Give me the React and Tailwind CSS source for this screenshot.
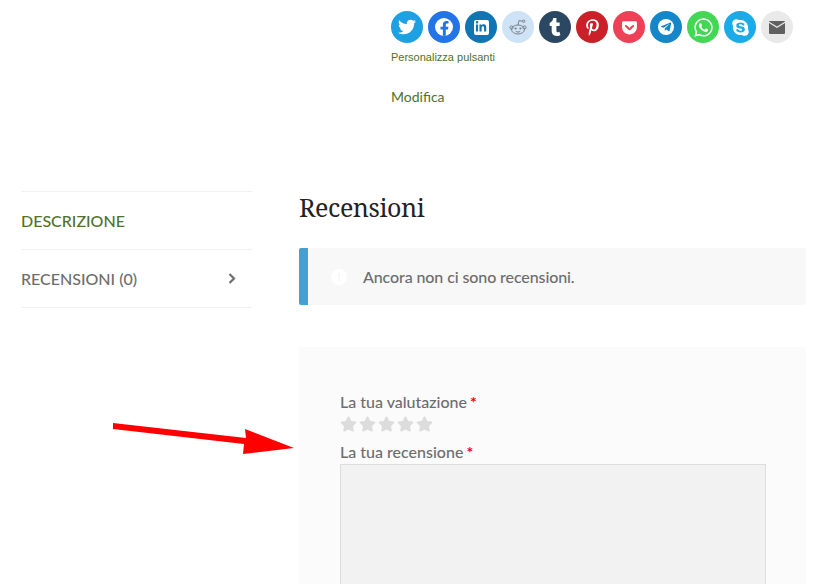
import {
	FaTwitter,
	FaFacebookF,
	FaLinkedinIn,
	FaTumblr,
	FaPinterestP,
	FaGetPocket,
	FaTelegramPlane,
	FaWhatsapp,
	FaSkype,
	FaStar,
	FaExclamation,
} from "react-icons/fa";

function RedditIcon() {
	return (
		<svg width="20" height="20" viewBox="0 0 20 20" fill="none" stroke="#7b8087" strokeWidth="1">
			<ellipse cx="10" cy="12.5" rx="6.5" ry="4.5" fill="#cfe3f7" />
			<circle cx="3.5" cy="10.5" r="1.6" />
			<circle cx="16.5" cy="10.5" r="1.6" />
			<path d="M10 8 L11 3.5 L14.5 4.3" />
			<circle cx="15.7" cy="4.2" r="1.2" />
			<circle cx="7.6" cy="11.5" r="1.1" fill="#7b8087" stroke="none" />
			<circle cx="12.4" cy="11.5" r="1.1" fill="#7b8087" stroke="none" />
			<path d="M7.8 14.5 Q10 15.8 12.2 14.5" />
		</svg>
	);
}

function MailIcon() {
	return (
		<svg width="16" height="13" viewBox="0 0 16 13">
			<rect width="16" height="13" rx="1" fill="#606060" />
			<path d="M0 1.2 L8 6.2 L16 1.2" fill="none" stroke="#e9e9e9" strokeWidth="1.2" />
		</svg>
	);
}

const shareButtons = [
	{ name: "twitter", bg: "bg-[#1da1e2]", icon: <FaTwitter className="text-white text-[18px]" /> },
	{ name: "facebook", bg: "bg-[#2374e6]", icon: <span className="flex h-[18px] w-[18px] items-end justify-center overflow-hidden rounded-full bg-white"><FaFacebookF className="text-[#2374e6] text-[15px]" /></span> },
	{ name: "linkedin", bg: "bg-[#0f76b3]", icon: <span className="flex h-[15px] w-[15px] items-center justify-center rounded-[2px] bg-white"><FaLinkedinIn className="text-[#0f76b3] text-[12px]" /></span> },
	{ name: "reddit", bg: "bg-[#cfe3f7]", icon: <RedditIcon /> },
	{ name: "tumblr", bg: "bg-[#2c4762]", icon: <FaTumblr className="text-white text-[18px]" /> },
	{ name: "pinterest", bg: "bg-[#cb2027]", icon: <FaPinterestP className="text-white text-[17px]" /> },
	{ name: "pocket", bg: "bg-[#ee4056]", icon: <FaGetPocket className="text-white text-[17px]" /> },
	{ name: "telegram", bg: "bg-[#1486c9]", icon: <span className="flex h-[16px] w-[16px] items-center justify-center rounded-full bg-white"><FaTelegramPlane className="text-[#1486c9] text-[12px]" /></span> },
	{ name: "whatsapp", bg: "bg-[#43d854]", icon: <FaWhatsapp className="text-white text-[21px]" /> },
	{ name: "skype", bg: "bg-[#1cabe9]", icon: <FaSkype className="text-white text-[19px]" /> },
	{ name: "email", bg: "bg-[#e9e9e9]", icon: <MailIcon /> },
];

function Arrow() {
	return (
		<svg className="absolute left-[110px] top-[420px]" width="190" height="40" viewBox="0 0 190 40">
			<path d="M3 3 L136 18 L135 9 L184 28 L133 34 L134 24 L3 9 Z" fill="#ff0000" />
		</svg>
	);
}

export default function App() {
	return (
		<div className="relative h-[584px] w-[813px] overflow-hidden bg-white font-['Lato','Liberation_Sans',sans-serif] text-[#6d6d6d]">
			{/* share buttons */}
			<div className="ml-[391px] h-[191px] pt-[11px]">
				<div className="flex gap-[5px]">
					{shareButtons.map((b) => (
						<span key={b.name} className={`flex h-[32px] w-[32px] items-center justify-center rounded-full ${b.bg}`}>
							{b.icon}
						</span>
					))}
				</div>
				<p className="mt-[7px] font-['Liberation_Sans',sans-serif] text-[11px] leading-[14px] text-[#4f7129]">Personalizza pulsanti</p>
				<p className="mt-[23px] text-[14px] leading-[20px] text-[#4f7129]">Modifica</p>
			</div>

			<div className="flex items-start pl-[21px] pr-[7px]">
				{/* tabs */}
				<div className="w-[231px] border-t border-[#f1f1f1]">
					<div className="flex h-[58px] items-center border-b border-[#f1f1f1] text-[16px] font-medium text-[#4f7129]">DESCRIZIONE</div>
					<div className="flex h-[58px] items-center justify-between border-b border-[#f1f1f1] pr-[16px] text-[16px] font-medium">
						<span>RECENSIONI (0)</span>
						<svg width="8" height="11" viewBox="0 0 8 11" fill="none" stroke="#707070" strokeWidth="2.2">
							<path d="M1.5 1 L6 5.5 L1.5 10" />
						</svg>
					</div>
				</div>

				{/* reviews */}
				<div className="ml-[47px] flex-1">
					<h2 className="h-[57px] font-['Noto_Serif','Liberation_Serif',serif] text-[25px] leading-[32px] tracking-[-0.4px] text-[#222222]">Recensioni</h2>
					<div className="flex h-[57px] items-center rounded-l-[2px] border-l-[9px] border-[#449fd4] bg-[#f8f8f8] pl-[23px]">
						<span className="flex h-[16px] w-[16px] items-center justify-center rounded-full bg-white">
							<FaExclamation className="text-[8px] text-[#f8f8f8]" />
						</span>
						<span className="ml-[16px] text-[16px] font-medium tracking-[-0.1px]">Ancora non ci sono recensioni.</span>
					</div>
					<div className="mt-[42px] h-[300px] bg-[#fbfbfb] pl-[41px] pr-[40px] pt-[44px]">
						<p className="text-[16px] font-medium leading-[22px]">La tua valutazione <span className="ml-[-1px] font-bold text-[#ff0000]">*</span></p>
						<div className="mt-[2px] flex h-[18px] gap-[2px] text-[#dcdcdc]">
							<FaStar className="h-[18px] w-[17px]" />
							<FaStar className="h-[18px] w-[17px]" />
							<FaStar className="h-[18px] w-[17px]" />
							<FaStar className="h-[18px] w-[17px]" />
							<FaStar className="h-[18px] w-[17px]" />
						</div>
						<p className="mt-[8px] text-[16px] font-medium leading-[22px]">La tua recensione <span className="ml-[-1px] font-bold text-[#ff0000]">*</span></p>
						<div className="mt-[1px] h-[200px] border border-[#dddddd] bg-[#f2f2f2]" />
					</div>
				</div>
			</div>

			<Arrow />
		</div>
	);
}
